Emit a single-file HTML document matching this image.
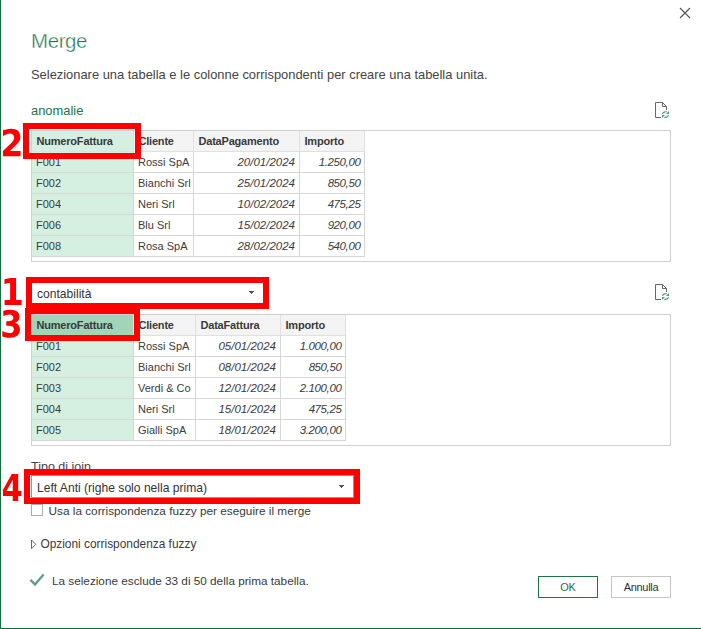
<!DOCTYPE html>
<html><head><meta charset="utf-8"><title>Merge</title>
<style>
html,body{margin:0;padding:0;}
body{width:701px;height:629px;position:relative;overflow:hidden;background:#fff;font-family:"Liberation Sans",sans-serif;}
.t{position:absolute;white-space:nowrap;}
.r{position:absolute;}
</style></head><body>
<div class="r" style="left:0px;top:0px;width:1px;height:629px;background:#176c3c;"></div>
<div class="r" style="left:0px;top:628px;width:701px;height:1px;background:#176c3c;"></div>
<svg class="r" style="left:679px;top:7px" width="13" height="13" viewBox="0 0 13 13"><path d="M1 1L11 11M11 1L1 11" stroke="#555" stroke-width="1.15" fill="none"/></svg>
<svg class="r" style="left:0;top:0" width="120" height="60"><text x="31" y="48" font-family="Liberation Sans, sans-serif" font-size="20.5" letter-spacing="-0.4" fill="#217346" stroke="#ffffff" stroke-width="0.4">Merge</text></svg>
<div class="t" style="left:31px;top:68.88px;font-size:12.9px;line-height:12.9px;color:#444;font-weight:normal;font-style:normal;">Selezionare una tabella e le colonne corrispondenti per creare una tabella unita.</div>
<div class="t" style="left:31px;top:104.78px;font-size:12.9px;line-height:12.9px;color:#217346;font-weight:normal;font-style:normal;">anomalie</div>
<svg class="r" style="left:654px;top:101px" width="17" height="19" viewBox="0 0 17 19">
<path d="M7 16.5H1.5V1.5H8.5L12.5 5.5V9" stroke="#666" stroke-width="1" fill="none"/>
<path d="M8.5 1.5V5.5H12.5" stroke="#666" stroke-width="1" fill="none"/>
<path d="M8.4 12.8Q9.6 10.4 12.6 10.6" stroke="#4d9a7a" stroke-width="1.3" fill="none"/>
<path d="M15 10V13H12Z" fill="#4d9a7a"/>
<path d="M10.4 16.5Q13.4 16.6 14.6 14.2" stroke="#4d9a7a" stroke-width="1.3" fill="none"/>
<path d="M8 14H11L8 17Z" fill="#4d9a7a"/>
</svg>
<div class="r" style="left:31px;top:130px;width:640px;height:132px;border:1px solid #d0d0d0;box-sizing:border-box;"></div>
<div class="r" style="left:32px;top:152px;width:101px;height:104px;background:#d5efe0;"></div>
<div class="r" style="left:32px;top:131px;width:332px;height:20px;background:#f4f4f4;"></div>
<div class="r" style="left:32px;top:131px;width:101px;height:20px;background:#d5efe0;"></div>
<div class="r" style="left:31px;top:151px;width:334px;height:1px;background:#e0e0e0;"></div>
<div class="r" style="left:31px;top:172px;width:334px;height:1px;background:#d6d6d6;"></div>
<div class="r" style="left:31px;top:193px;width:334px;height:1px;background:#d6d6d6;"></div>
<div class="r" style="left:31px;top:214px;width:334px;height:1px;background:#d6d6d6;"></div>
<div class="r" style="left:31px;top:235px;width:334px;height:1px;background:#d6d6d6;"></div>
<div class="r" style="left:31px;top:256px;width:334px;height:1px;background:#d6d6d6;"></div>
<div class="r" style="left:133px;top:131px;width:1px;height:20px;background:#e0e0e0;"></div>
<div class="r" style="left:133px;top:152px;width:1px;height:105px;background:#d6d6d6;"></div>
<div class="r" style="left:193px;top:131px;width:1px;height:20px;background:#e0e0e0;"></div>
<div class="r" style="left:193px;top:152px;width:1px;height:105px;background:#d6d6d6;"></div>
<div class="r" style="left:299px;top:131px;width:1px;height:20px;background:#e0e0e0;"></div>
<div class="r" style="left:299px;top:152px;width:1px;height:105px;background:#d6d6d6;"></div>
<div class="r" style="left:364px;top:131px;width:1px;height:20px;background:#e0e0e0;"></div>
<div class="r" style="left:364px;top:152px;width:1px;height:105px;background:#d6d6d6;"></div>
<div class="t" style="left:36.5px;top:135.69px;font-size:11px;line-height:11px;color:#3a3a3a;font-weight:bold;font-style:normal;letter-spacing:-0.2px;">NumeroFattura</div>
<div class="t" style="left:138.5px;top:135.69px;font-size:11px;line-height:11px;color:#3a3a3a;font-weight:bold;font-style:normal;letter-spacing:-0.2px;">Cliente</div>
<div class="t" style="left:198.5px;top:135.69px;font-size:11px;line-height:11px;color:#3a3a3a;font-weight:bold;font-style:normal;letter-spacing:-0.2px;">DataPagamento</div>
<div class="t" style="left:304.5px;top:135.69px;font-size:11px;line-height:11px;color:#3a3a3a;font-weight:bold;font-style:normal;letter-spacing:-0.2px;">Importo</div>
<div class="t" style="left:36px;top:157.39px;font-size:11px;line-height:11px;color:#3c3c3c;font-weight:normal;font-style:normal;">F001</div>
<div class="t" style="left:138px;top:157.39px;font-size:11px;line-height:11px;color:#3c3c3c;font-weight:normal;font-style:normal;">Rossi SpA</div>
<div class="t" style="right:406px;top:156.97px;font-size:11.5px;line-height:11.5px;color:#3c3c3c;font-weight:normal;font-style:italic;text-align:right;">20/01/2024</div>
<div class="t" style="right:340.6px;top:156.97px;font-size:11.5px;line-height:11.5px;color:#3c3c3c;font-weight:normal;font-style:italic;text-align:right;letter-spacing:-0.4px;">1.250,00</div>
<div class="t" style="left:36px;top:178.39px;font-size:11px;line-height:11px;color:#3c3c3c;font-weight:normal;font-style:normal;">F002</div>
<div class="t" style="left:138px;top:178.39px;font-size:11px;line-height:11px;color:#3c3c3c;font-weight:normal;font-style:normal;">Bianchi Srl</div>
<div class="t" style="right:406px;top:177.97px;font-size:11.5px;line-height:11.5px;color:#3c3c3c;font-weight:normal;font-style:italic;text-align:right;">25/01/2024</div>
<div class="t" style="right:340.6px;top:177.97px;font-size:11.5px;line-height:11.5px;color:#3c3c3c;font-weight:normal;font-style:italic;text-align:right;letter-spacing:-0.4px;">850,50</div>
<div class="t" style="left:36px;top:199.39px;font-size:11px;line-height:11px;color:#3c3c3c;font-weight:normal;font-style:normal;">F004</div>
<div class="t" style="left:138px;top:199.39px;font-size:11px;line-height:11px;color:#3c3c3c;font-weight:normal;font-style:normal;">Neri Srl</div>
<div class="t" style="right:406px;top:198.97px;font-size:11.5px;line-height:11.5px;color:#3c3c3c;font-weight:normal;font-style:italic;text-align:right;">10/02/2024</div>
<div class="t" style="right:340.6px;top:198.97px;font-size:11.5px;line-height:11.5px;color:#3c3c3c;font-weight:normal;font-style:italic;text-align:right;letter-spacing:-0.4px;">475,25</div>
<div class="t" style="left:36px;top:220.39px;font-size:11px;line-height:11px;color:#3c3c3c;font-weight:normal;font-style:normal;">F006</div>
<div class="t" style="left:138px;top:220.39px;font-size:11px;line-height:11px;color:#3c3c3c;font-weight:normal;font-style:normal;">Blu Srl</div>
<div class="t" style="right:406px;top:219.97px;font-size:11.5px;line-height:11.5px;color:#3c3c3c;font-weight:normal;font-style:italic;text-align:right;">15/02/2024</div>
<div class="t" style="right:340.6px;top:219.97px;font-size:11.5px;line-height:11.5px;color:#3c3c3c;font-weight:normal;font-style:italic;text-align:right;letter-spacing:-0.4px;">920,00</div>
<div class="t" style="left:36px;top:241.39px;font-size:11px;line-height:11px;color:#3c3c3c;font-weight:normal;font-style:normal;">F008</div>
<div class="t" style="left:138px;top:241.39px;font-size:11px;line-height:11px;color:#3c3c3c;font-weight:normal;font-style:normal;">Rosa SpA</div>
<div class="t" style="right:406px;top:240.97px;font-size:11.5px;line-height:11.5px;color:#3c3c3c;font-weight:normal;font-style:italic;text-align:right;">28/02/2024</div>
<div class="t" style="right:340.6px;top:240.97px;font-size:11.5px;line-height:11.5px;color:#3c3c3c;font-weight:normal;font-style:italic;text-align:right;letter-spacing:-0.4px;">540,00</div>
<div class="r" style="left:31px;top:282px;width:233px;height:22px;background:#fff;border:1px solid #aaa;box-sizing:border-box;"></div>
<div class="t" style="left:37px;top:287.56px;font-size:12.1px;line-height:12.1px;color:#333;font-weight:normal;font-style:normal;">contabilità</div>
<div class="r" style="left:249px;top:291px;width:5px;height:1px;background:#555;"></div>
<div class="r" style="left:250px;top:292px;width:3px;height:1px;background:#555;"></div>
<div class="r" style="left:251px;top:293px;width:1px;height:1px;background:#555;"></div>
<svg class="r" style="left:654px;top:283px" width="17" height="19" viewBox="0 0 17 19">
<path d="M7 16.5H1.5V1.5H8.5L12.5 5.5V9" stroke="#666" stroke-width="1" fill="none"/>
<path d="M8.5 1.5V5.5H12.5" stroke="#666" stroke-width="1" fill="none"/>
<path d="M8.4 12.8Q9.6 10.4 12.6 10.6" stroke="#4d9a7a" stroke-width="1.3" fill="none"/>
<path d="M15 10V13H12Z" fill="#4d9a7a"/>
<path d="M10.4 16.5Q13.4 16.6 14.6 14.2" stroke="#4d9a7a" stroke-width="1.3" fill="none"/>
<path d="M8 14H11L8 17Z" fill="#4d9a7a"/>
</svg>
<div class="r" style="left:31px;top:314px;width:640px;height:132px;border:1px solid #d0d0d0;box-sizing:border-box;"></div>
<div class="r" style="left:32px;top:336px;width:101px;height:104px;background:#d5efe0;"></div>
<div class="r" style="left:32px;top:315px;width:313px;height:20px;background:#f4f4f4;"></div>
<div class="r" style="left:32px;top:315px;width:101px;height:20px;background:#a0d5b8;"></div>
<div class="r" style="left:31px;top:335px;width:315px;height:1px;background:#e0e0e0;"></div>
<div class="r" style="left:31px;top:356px;width:315px;height:1px;background:#d6d6d6;"></div>
<div class="r" style="left:31px;top:377px;width:315px;height:1px;background:#d6d6d6;"></div>
<div class="r" style="left:31px;top:398px;width:315px;height:1px;background:#d6d6d6;"></div>
<div class="r" style="left:31px;top:419px;width:315px;height:1px;background:#d6d6d6;"></div>
<div class="r" style="left:31px;top:440px;width:315px;height:1px;background:#d6d6d6;"></div>
<div class="r" style="left:133px;top:315px;width:1px;height:20px;background:#e0e0e0;"></div>
<div class="r" style="left:133px;top:336px;width:1px;height:105px;background:#d6d6d6;"></div>
<div class="r" style="left:195px;top:315px;width:1px;height:20px;background:#e0e0e0;"></div>
<div class="r" style="left:195px;top:336px;width:1px;height:105px;background:#d6d6d6;"></div>
<div class="r" style="left:280px;top:315px;width:1px;height:20px;background:#e0e0e0;"></div>
<div class="r" style="left:280px;top:336px;width:1px;height:105px;background:#d6d6d6;"></div>
<div class="r" style="left:345px;top:315px;width:1px;height:20px;background:#e0e0e0;"></div>
<div class="r" style="left:345px;top:336px;width:1px;height:105px;background:#d6d6d6;"></div>
<div class="t" style="left:36.5px;top:319.69px;font-size:11px;line-height:11px;color:#3a3a3a;font-weight:bold;font-style:normal;letter-spacing:-0.2px;">NumeroFattura</div>
<div class="t" style="left:138.5px;top:319.69px;font-size:11px;line-height:11px;color:#3a3a3a;font-weight:bold;font-style:normal;letter-spacing:-0.2px;">Cliente</div>
<div class="t" style="left:200.5px;top:319.69px;font-size:11px;line-height:11px;color:#3a3a3a;font-weight:bold;font-style:normal;letter-spacing:-0.2px;">DataFattura</div>
<div class="t" style="left:285.5px;top:319.69px;font-size:11px;line-height:11px;color:#3a3a3a;font-weight:bold;font-style:normal;letter-spacing:-0.2px;">Importo</div>
<div class="t" style="left:36px;top:341.39px;font-size:11px;line-height:11px;color:#3c3c3c;font-weight:normal;font-style:normal;">F001</div>
<div class="t" style="left:138px;top:341.39px;font-size:11px;line-height:11px;color:#3c3c3c;font-weight:normal;font-style:normal;">Rossi SpA</div>
<div class="t" style="right:425px;top:340.97px;font-size:11.5px;line-height:11.5px;color:#3c3c3c;font-weight:normal;font-style:italic;text-align:right;">05/01/2024</div>
<div class="t" style="right:359.6px;top:340.97px;font-size:11.5px;line-height:11.5px;color:#3c3c3c;font-weight:normal;font-style:italic;text-align:right;letter-spacing:-0.4px;">1.000,00</div>
<div class="t" style="left:36px;top:362.39px;font-size:11px;line-height:11px;color:#3c3c3c;font-weight:normal;font-style:normal;">F002</div>
<div class="t" style="left:138px;top:362.39px;font-size:11px;line-height:11px;color:#3c3c3c;font-weight:normal;font-style:normal;">Bianchi Srl</div>
<div class="t" style="right:425px;top:361.97px;font-size:11.5px;line-height:11.5px;color:#3c3c3c;font-weight:normal;font-style:italic;text-align:right;">08/01/2024</div>
<div class="t" style="right:359.6px;top:361.97px;font-size:11.5px;line-height:11.5px;color:#3c3c3c;font-weight:normal;font-style:italic;text-align:right;letter-spacing:-0.4px;">850,50</div>
<div class="t" style="left:36px;top:383.39px;font-size:11px;line-height:11px;color:#3c3c3c;font-weight:normal;font-style:normal;">F003</div>
<div class="t" style="left:138px;top:383.39px;font-size:11px;line-height:11px;color:#3c3c3c;font-weight:normal;font-style:normal;">Verdi &amp; Co</div>
<div class="t" style="right:425px;top:382.97px;font-size:11.5px;line-height:11.5px;color:#3c3c3c;font-weight:normal;font-style:italic;text-align:right;">12/01/2024</div>
<div class="t" style="right:359.6px;top:382.97px;font-size:11.5px;line-height:11.5px;color:#3c3c3c;font-weight:normal;font-style:italic;text-align:right;letter-spacing:-0.4px;">2.100,00</div>
<div class="t" style="left:36px;top:404.39px;font-size:11px;line-height:11px;color:#3c3c3c;font-weight:normal;font-style:normal;">F004</div>
<div class="t" style="left:138px;top:404.39px;font-size:11px;line-height:11px;color:#3c3c3c;font-weight:normal;font-style:normal;">Neri Srl</div>
<div class="t" style="right:425px;top:403.97px;font-size:11.5px;line-height:11.5px;color:#3c3c3c;font-weight:normal;font-style:italic;text-align:right;">15/01/2024</div>
<div class="t" style="right:359.6px;top:403.97px;font-size:11.5px;line-height:11.5px;color:#3c3c3c;font-weight:normal;font-style:italic;text-align:right;letter-spacing:-0.4px;">475,25</div>
<div class="t" style="left:36px;top:425.39px;font-size:11px;line-height:11px;color:#3c3c3c;font-weight:normal;font-style:normal;">F005</div>
<div class="t" style="left:138px;top:425.39px;font-size:11px;line-height:11px;color:#3c3c3c;font-weight:normal;font-style:normal;">Gialli SpA</div>
<div class="t" style="right:425px;top:424.97px;font-size:11.5px;line-height:11.5px;color:#3c3c3c;font-weight:normal;font-style:italic;text-align:right;">18/01/2024</div>
<div class="t" style="right:359.6px;top:424.97px;font-size:11.5px;line-height:11.5px;color:#3c3c3c;font-weight:normal;font-style:italic;text-align:right;letter-spacing:-0.4px;">3.200,00</div>
<div class="t" style="left:31px;top:461.42px;font-size:12.5px;line-height:12.5px;color:#444;font-weight:normal;font-style:normal;">Tipo di join</div>
<div class="r" style="left:31px;top:475px;width:323px;height:23px;background:#fff;border:1px solid #999;box-sizing:border-box;"></div>
<div class="t" style="left:37px;top:481.56px;font-size:12.1px;line-height:12.1px;color:#333;font-weight:normal;font-style:normal;">Left Anti (righe solo nella prima)</div>
<div class="r" style="left:339px;top:485px;width:5px;height:1px;background:#555;"></div>
<div class="r" style="left:340px;top:486px;width:3px;height:1px;background:#555;"></div>
<div class="r" style="left:341px;top:487px;width:1px;height:1px;background:#555;"></div>
<div class="r" style="left:31px;top:504px;width:12px;height:12px;background:#fff;border:1px solid #ababab;box-sizing:border-box;"></div>
<div class="t" style="left:48.5px;top:505.51px;font-size:11.8px;line-height:11.8px;color:#3a3a3a;font-weight:normal;font-style:normal;">Usa la corrispondenza fuzzy per eseguire il merge</div>
<svg class="r" style="left:30px;top:539px" width="8" height="11"><path d="M1.5 1V9.7L5.8 5.35Z" stroke="#666" stroke-width="1" fill="none"/></svg>
<div class="t" style="left:40.4px;top:538.63px;font-size:11.9px;line-height:11.9px;color:#3a3a3a;font-weight:normal;font-style:normal;">Opzioni corrispondenza fuzzy</div>
<svg class="r" style="left:29px;top:573px" width="16" height="15"><path d="M1.5 6.9L6 11.6L14.6 1.6" stroke="#5a9e84" stroke-width="2.3" fill="none"/></svg>
<div class="t" style="left:52px;top:574.55px;font-size:11.75px;line-height:11.75px;color:#3a3a3a;font-weight:normal;font-style:normal;">La selezione esclude 33 di 50 della prima tabella.</div>
<div class="r" style="left:538px;top:576px;width:60px;height:22px;background:#fff;border:1px solid #217346;box-sizing:border-box;"></div>
<div class="t" style="left:538px;top:576px;width:60px;height:22px;line-height:22px;font-size:11px;letter-spacing:-0.3px;text-align:center;color:#2a6e50">OK</div>
<div class="r" style="left:611px;top:576px;width:60px;height:22px;background:#fff;border:1px solid #c4c4c4;box-sizing:border-box;"></div>
<div class="t" style="left:611px;top:576px;width:60px;height:22px;line-height:22px;font-size:11px;letter-spacing:-0.3px;text-align:center;color:#333">Annulla</div>
<div class="r" style="left:23px;top:123px;width:118px;height:36px;border:6px solid #ff0000;box-sizing:border-box;"></div>
<div class="r" style="left:26px;top:277px;width:243px;height:32px;border:6px solid #ff0000;box-sizing:border-box;"></div>
<div class="r" style="left:25px;top:308px;width:115px;height:33px;border:6px solid #ff0000;box-sizing:border-box;"></div>
<div class="r" style="left:24px;top:469px;width:336px;height:35px;border:6px solid #ff0000;box-sizing:border-box;"></div>
<svg class="r" style="left:0;top:0" width="701" height="629"><path transform="translate(0.7 304.9) scale(0.01808 -0.01808)" d="M216 266H522V1231L208 1159V1421L520 1493H850V266H1156V0H216Z" fill="#ff0000"/><path transform="translate(0.3 156.2) scale(0.01808 -0.01808)" d="M531 283H1122V0H146V283L636 764Q702 830 733.5 893.0Q765 956 765 1024Q765 1129 701.5 1193.0Q638 1257 533 1257Q452 1257 355.5 1218.5Q259 1180 149 1104V1432Q266 1475 380.5 1497.5Q495 1520 605 1520Q846 1520 979.5 1402.0Q1113 1284 1113 1073Q1113 951 1056.5 845.5Q1000 740 818 563Z" fill="#ff0000"/><path transform="translate(0.1 337.3) scale(0.0175 -0.01808)" d="M859 805Q994 766 1065.0 669.5Q1136 573 1136 424Q1136 202 983.0 86.5Q830 -29 536 -29Q433 -29 329.0 -10.5Q225 8 123 45V342Q220 288 316.0 260.5Q412 233 505 233Q643 233 716.0 286.0Q789 339 789 438Q789 540 714.0 592.5Q639 645 492 645H354V893H500Q630 893 694.0 938.5Q758 984 758 1077Q758 1163 696.0 1210.0Q634 1257 520 1257Q436 1257 351.0 1236.0Q266 1215 181 1174V1456Q284 1488 384.5 1504.0Q485 1520 582 1520Q844 1520 974.0 1424.5Q1104 1329 1104 1137Q1104 1006 1042.0 922.5Q980 839 859 805Z" fill="#ff0000"/><path transform="translate(1.5 501.0) scale(0.0166 -0.01808)" d="M679 1176 299 551H679ZM621 1493H1006V551H1198V272H1006V0H679V272H83V602Z" fill="#ff0000"/></svg>
</body></html>
